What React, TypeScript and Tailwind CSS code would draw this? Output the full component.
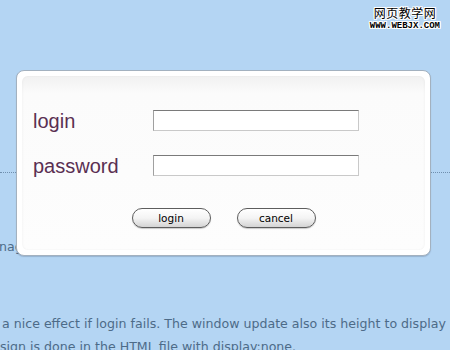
export default function App() {
  return (
    <div className="relative h-[350px] w-[450px] overflow-hidden bg-[#b4d5f3] font-['DejaVu_Sans',sans-serif]">
      {/* watermark */}
      <div className="absolute right-[10px] top-[7px] flex flex-col items-center leading-none [text-shadow:1px_0_0_#fff,-1px_0_0_#fff,0_1px_0_#fff,0_-1px_0_#fff,1px_1px_0_#fff,-1px_-1px_0_#fff,1px_-1px_0_#fff,-1px_1px_0_#fff]">
        <span className="font-['Noto_Sans_CJK_SC',sans-serif] text-[12px] tracking-[0.5px] text-black">网页教学网</span>
        <span className="mt-[3px] font-['Liberation_Mono',monospace] text-[9px] font-bold text-black">WWW.WEBJX.COM</span>
      </div>

      {/* page behind the dialog */}
      <div className="pt-[172px]">
        <div className="border-t border-dotted border-[#6f8fae]" />
        <p className="ml-[-21px] mt-[64px] whitespace-nowrap text-[12.6px] leading-[20px] text-[#4d6b88]">management of the window</p>
        <div className="ml-[2px] mt-[55px] whitespace-nowrap text-[12.6px] leading-[23px] text-[#4d6b88]">
          <p>a nice effect if login fails. The window update also its height to display</p>
          <p className="ml-[-2px]">sign is done in the HTML file with display:none.</p>
        </div>
      </div>

      {/* login dialog */}
      <div className="absolute left-[16px] top-[70px] h-[186px] w-[415px] rounded-[8px] border border-[#a3b1bf] bg-white p-[5px] shadow-[0_1px_1px_rgba(80,100,130,0.3)]">
        <div className="h-full rounded-[6px] bg-gradient-to-b from-[#f1f1f1] via-[#fbfbfb] via-[10%] to-[#fdfdfd] pl-[11px] pt-[34px] shadow-[inset_1px_0_2px_rgba(0,0,0,0.03),inset_-1px_0_2px_rgba(0,0,0,0.03)]">
          <div className="grid grid-cols-[120px_206px] gap-y-[24px]">
            <label className="flex items-center font-['Liberation_Sans',sans-serif] text-[20px] leading-none text-[#5a2f52]">login</label>
            <div className="h-[21px] border border-[#c9c9c9] border-t-[#7a7a7a] border-l-[#a0a0a0] bg-white" />
            <label className="flex items-center font-['Liberation_Sans',sans-serif] text-[20px] leading-none text-[#5a2f52]">password</label>
            <div className="h-[21px] border border-[#c9c9c9] border-t-[#7a7a7a] border-l-[#a0a0a0] bg-white" />
          </div>
          <div className="ml-[-11px] mt-[32px] flex justify-center gap-[26px]">
            <button className="h-[20px] w-[79px] rounded-full border border-[#5d5d5d] bg-gradient-to-b from-white via-[#f4f4f4] to-[#d4d4d4] font-['DejaVu_Sans',sans-serif] text-[10.5px] leading-none text-black shadow-[0_1px_1px_rgba(0,0,0,0.2)]">
              login
            </button>
            <button className="h-[20px] w-[79px] rounded-full border border-[#5d5d5d] bg-gradient-to-b from-white via-[#f4f4f4] to-[#d4d4d4] font-['DejaVu_Sans',sans-serif] text-[10.5px] leading-none text-black shadow-[0_1px_1px_rgba(0,0,0,0.2)]">
              cancel
            </button>
          </div>
        </div>
      </div>
    </div>
  );
}
